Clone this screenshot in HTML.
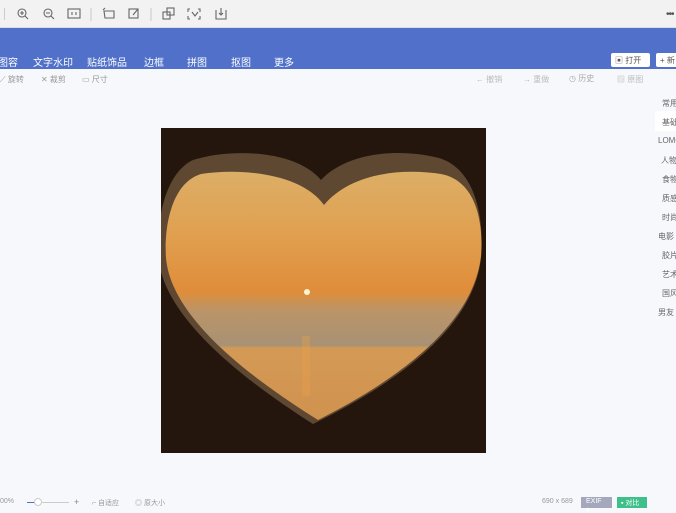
<!DOCTYPE html>
<html><head><meta charset="utf-8"><style>
*{margin:0;padding:0;box-sizing:border-box}
body{width:676px;height:508px;overflow:hidden;background:#f7f8fc;font-family:"Liberation Sans","Noto Sans CJK SC",sans-serif;position:relative}
.top{position:absolute;left:0;top:0;width:676px;height:28px;background:#f2f2f2;border-bottom:1px solid #ddd}
.blue{position:absolute;left:0;top:28px;width:676px;height:41px;background:#5070c9}
.nav{position:absolute;top:54px;color:#fff;font-size:10px}
.gr{position:absolute;color:#999;font-size:8px}
.btn{position:absolute;top:53px;height:14px;background:#fff;border-radius:2px;font-size:8px;color:#555;padding:2px 4px}
.side{position:absolute;right:0;font-size:8px;color:#666;width:22px;text-align:left}
</style></head><body>
<div class="top"></div>
<div style="position:absolute;left:4px;top:8px;width:1px;height:12px;background:#ccc"></div>
<svg style="position:absolute;left:0;top:0" width="240" height="28" fill="none" stroke="#666" stroke-width="1.1">
<circle cx="22" cy="13" r="4"/><path d="M20 13h4M22 11v4M25 16l3 3"/>
<circle cx="48" cy="13" r="4"/><path d="M46 13h4M51 16l3 3"/>
<rect x="68" y="9" width="12" height="9"/><path d="M72 12v3M76 12v3"/>
<path d="M91 8v13" stroke="#ccc"/>
<path d="M103 10l2-2M104 11h10v7h-9z"/>
<rect x="129" y="9" width="9" height="9"/><path d="M133 15l5-6"/>
<path d="M151 8v13" stroke="#ccc"/>
<rect x="163" y="12" width="7" height="7"/><rect x="167" y="8" width="7" height="7"/>
<path d="M190 9h-2v3M198 9h2v3M190 19h-2v-3M198 19h2v-3M192 12l3 4 3-4"/>
<path d="M216 10v9h10v-9M221 8v7M219 13l2 2 2-2"/>
</svg>
<div style="position:absolute;left:666px;top:9px;color:#555;font-size:10px;letter-spacing:-1px">•••</div>
<div class="blue"></div>
<div class="nav" style="left:-2px">图容</div>
<div class="nav" style="left:33px">文字水印</div>
<div class="nav" style="left:87px">贴纸饰品</div>
<div class="nav" style="left:144px">边框</div>
<div class="nav" style="left:187px">拼图</div>
<div class="nav" style="left:231px">抠图</div>
<div class="nav" style="left:274px">更多</div>
<div class="btn" style="left:611px;width:39px">▣ 打开</div>
<div class="btn" style="left:656px;width:30px">+ 新</div>
<div class="gr" style="left:0;top:74px">⟋ 旋转</div>
<div class="gr" style="left:41px;top:74px">✕ 裁剪</div>
<div class="gr" style="left:82px;top:74px">▭ 尺寸</div>
<div class="gr" style="left:476px;top:74px;color:#bbb">← 撤销</div>
<div class="gr" style="left:523px;top:74px;color:#bbb">→ 重做</div>
<div class="gr" style="left:569px;top:73px;color:#aaa">◷ 历史</div>
<div class="gr" style="left:617px;top:74px;color:#bbb">▨ 原图</div>
<div style="position:absolute;left:655px;top:111px;width:21px;height:20px;background:#fff"></div>
<div class="side" style="top:98px;left:662px">常用</div>
<div class="side" style="top:117px;left:662px">基础</div>
<div class="side" style="top:136px;left:658px">LOMO</div>
<div class="side" style="top:155px;left:661px">人物</div>
<div class="side" style="top:174px;left:662px">食物</div>
<div class="side" style="top:193px;left:662px">质感</div>
<div class="side" style="top:212px;left:662px">时尚</div>
<div class="side" style="top:231px;left:658px">电影</div>
<div class="side" style="top:250px;left:662px">胶片</div>
<div class="side" style="top:269px;left:662px">艺术</div>
<div class="side" style="top:288px;left:662px">国风</div>
<div class="side" style="top:307px;left:658px">男友</div>
<svg style="position:absolute;left:161px;top:128px" width="325" height="325">
<defs>
<linearGradient id="g" x1="0" y1="0" x2="0" y2="1">
<stop offset="0" stop-color="#dcae66"/><stop offset="0.25" stop-color="#e0a050"/><stop offset="0.48" stop-color="#e08d3a"/>
<stop offset="0.56" stop-color="#bb9468"/><stop offset="0.7" stop-color="#a89274"/><stop offset="0.71" stop-color="#d49a55"/>
<stop offset="1" stop-color="#d0924f"/></linearGradient>
</defs>
<rect width="325" height="325" fill="#25160d"/>
<path d="M160,52 C135,22 70,20 32,32 C2,46 -6,100 -2,135 C8,195 88,255 152,296 C225,260 312,205 320,130 C324,85 312,40 278,30 C238,20 186,24 160,52 Z" fill="#5e4832"/>
<path d="M163,77 C140,45 80,40 40,46 C10,55 3,100 5,130 C10,190 90,250 157,292 C230,255 312,200 320,128 C323,88 312,52 280,46 C240,40 190,45 163,77 Z" fill="url(#g)"/>
<circle cx="146" cy="164" r="3" fill="#fff4d0"/>
<rect x="141" y="208" width="8" height="60" fill="#eaa048" opacity="0.35"/>
</svg>
<div style="position:absolute;left:0;top:498px;font-size:7px;color:#999">00%</div>
<div style="position:absolute;left:27px;top:502px;width:42px;height:1px;background:#ccc"></div>
<div style="position:absolute;left:27px;top:502px;width:8px;height:1px;background:#5070c9"></div>
<div style="position:absolute;left:34px;top:498px;width:8px;height:8px;border-radius:50%;background:#fff;border:1px solid #ccc"></div>
<div style="position:absolute;left:74px;top:497px;font-size:9px;color:#888">+</div>
<div style="position:absolute;left:92px;top:498px;font-size:7px;color:#999">⌐ 自适应</div>
<div style="position:absolute;left:135px;top:498px;font-size:7px;color:#999">◎ 原大小</div>
<div style="position:absolute;left:542px;top:498px;font-size:7px;color:#999">690 x 689</div>
<div style="position:absolute;left:581px;top:497px;width:31px;height:11px;background:#a5a8bc;color:#fff;font-size:7px;padding:1px 5px">EXIF ▴</div>
<div style="position:absolute;left:617px;top:497px;width:30px;height:11px;background:#3fbf8a;color:#fff;font-size:7px;padding:1px 4px">▪ 对比</div>
</body></html>
